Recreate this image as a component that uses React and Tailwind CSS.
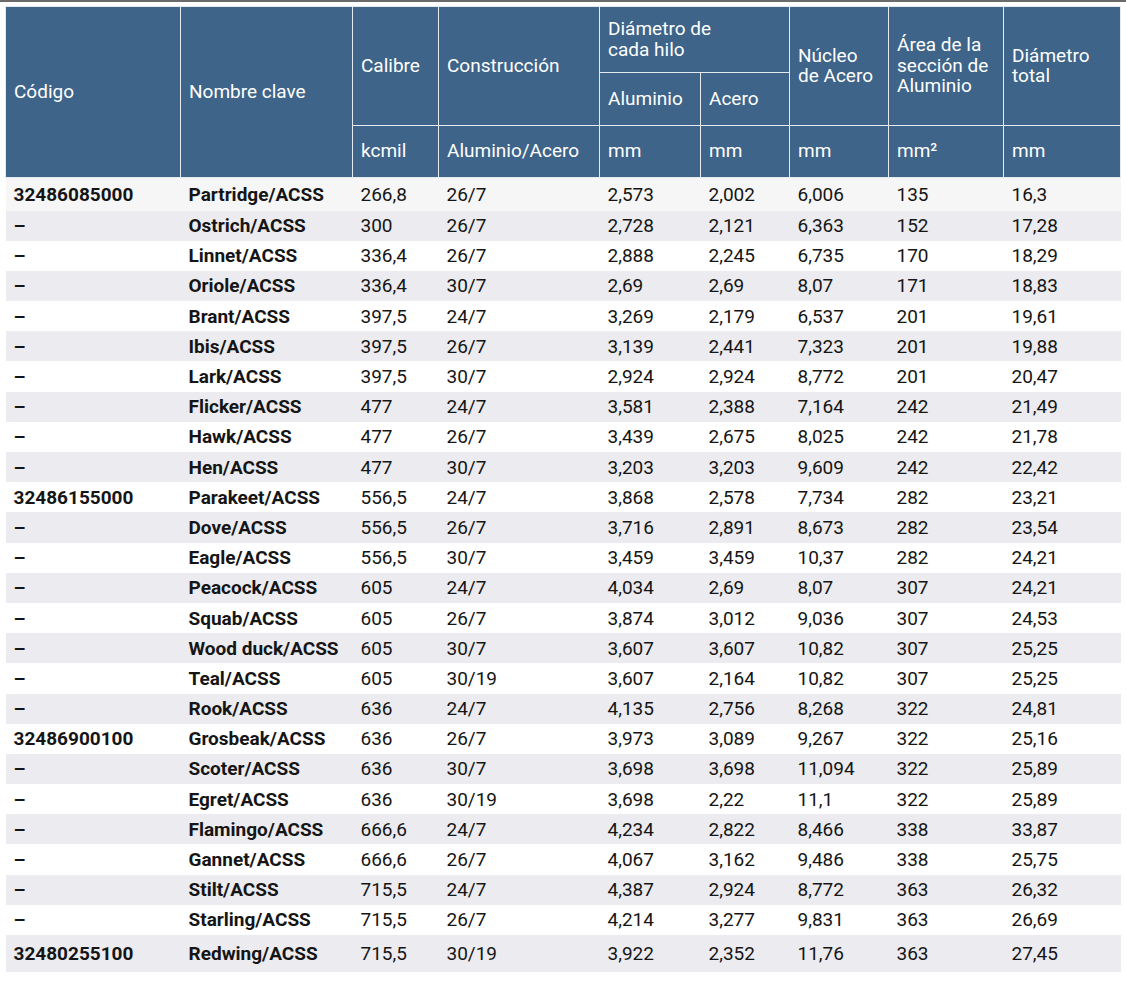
import React from 'react';

const rows = [
  ['32486085000', 'Partridge/ACSS', '266,8', '26/7', '2,573', '2,002', '6,006', '135', '16,3'],
  ['–', 'Ostrich/ACSS', '300', '26/7', '2,728', '2,121', '6,363', '152', '17,28'],
  ['–', 'Linnet/ACSS', '336,4', '26/7', '2,888', '2,245', '6,735', '170', '18,29'],
  ['–', 'Oriole/ACSS', '336,4', '30/7', '2,69', '2,69', '8,07', '171', '18,83'],
  ['–', 'Brant/ACSS', '397,5', '24/7', '3,269', '2,179', '6,537', '201', '19,61'],
  ['–', 'Ibis/ACSS', '397,5', '26/7', '3,139', '2,441', '7,323', '201', '19,88'],
  ['–', 'Lark/ACSS', '397,5', '30/7', '2,924', '2,924', '8,772', '201', '20,47'],
  ['–', 'Flicker/ACSS', '477', '24/7', '3,581', '2,388', '7,164', '242', '21,49'],
  ['–', 'Hawk/ACSS', '477', '26/7', '3,439', '2,675', '8,025', '242', '21,78'],
  ['–', 'Hen/ACSS', '477', '30/7', '3,203', '3,203', '9,609', '242', '22,42'],
  ['32486155000', 'Parakeet/ACSS', '556,5', '24/7', '3,868', '2,578', '7,734', '282', '23,21'],
  ['–', 'Dove/ACSS', '556,5', '26/7', '3,716', '2,891', '8,673', '282', '23,54'],
  ['–', 'Eagle/ACSS', '556,5', '30/7', '3,459', '3,459', '10,37', '282', '24,21'],
  ['–', 'Peacock/ACSS', '605', '24/7', '4,034', '2,69', '8,07', '307', '24,21'],
  ['–', 'Squab/ACSS', '605', '26/7', '3,874', '3,012', '9,036', '307', '24,53'],
  ['–', 'Wood duck/ACSS', '605', '30/7', '3,607', '3,607', '10,82', '307', '25,25'],
  ['–', 'Teal/ACSS', '605', '30/19', '3,607', '2,164', '10,82', '307', '25,25'],
  ['–', 'Rook/ACSS', '636', '24/7', '4,135', '2,756', '8,268', '322', '24,81'],
  ['32486900100', 'Grosbeak/ACSS', '636', '26/7', '3,973', '3,089', '9,267', '322', '25,16'],
  ['–', 'Scoter/ACSS', '636', '30/7', '3,698', '3,698', '11,094', '322', '25,89'],
  ['–', 'Egret/ACSS', '636', '30/19', '3,698', '2,22', '11,1', '322', '25,89'],
  ['–', 'Flamingo/ACSS', '666,6', '24/7', '4,234', '2,822', '8,466', '338', '33,87'],
  ['–', 'Gannet/ACSS', '666,6', '26/7', '4,067', '3,162', '9,486', '338', '25,75'],
  ['–', 'Stilt/ACSS', '715,5', '24/7', '4,387', '2,924', '8,772', '363', '26,32'],
  ['–', 'Starling/ACSS', '715,5', '26/7', '4,214', '3,277', '9,831', '363', '26,69'],
  ['32480255100', 'Redwing/ACSS', '715,5', '30/19', '3,922', '2,352', '11,76', '363', '27,45'],
];

const th = 'border border-[#e4eaf0] bg-[#3e6489] px-2 text-left align-middle font-normal leading-[20.5px] text-white';

const rowBg = (i) => {
  if (i === 0) return 'bg-[#f6f6f6]';
  return i % 2 === 1 ? 'bg-[#ebebf0]' : 'bg-white';
};

const rowH = (i) => {
  if (i === 0) return 'h-[33px]';
  if (i === rows.length - 1) return 'h-[37px]';
  return 'h-[30.2px]';
};

export default function App() {
  return (
    <div className="min-h-screen bg-white font-['Roboto',sans-serif] text-[19px] text-[#151515]">
      <div className="h-[2px] bg-[#6a6a6a]" />
      <div className="pl-[5px] pt-[4px]">
        <table className="w-[1115px] table-fixed border-collapse">
          <colgroup>
            <col className="w-[175px]" />
            <col className="w-[172px]" />
            <col className="w-[86px]" />
            <col className="w-[161px]" />
            <col className="w-[101px]" />
            <col className="w-[89px]" />
            <col className="w-[99px]" />
            <col className="w-[115px]" />
            <col className="w-[117px]" />
          </colgroup>
          <thead>
            <tr className="h-[66px]">
              <th rowSpan={3} className={th}>Código</th>
              <th rowSpan={3} className={th}>Nombre clave</th>
              <th rowSpan={2} className={th}>Calibre</th>
              <th rowSpan={2} className={th}>Construcción</th>
              <th colSpan={2} className={th}>Diámetro de<br />cada hilo</th>
              <th rowSpan={2} className={th}>Núcleo<br />de Acero</th>
              <th rowSpan={2} className={th}>Área de la<br />sección de<br />Aluminio</th>
              <th rowSpan={2} className={th}>Diámetro<br />total</th>
            </tr>
            <tr className="h-[53px]">
              <th className={th}>Aluminio</th>
              <th className={th}>Acero</th>
            </tr>
            <tr className="h-[52px]">
              <th className={th}>kcmil</th>
              <th className={th}>Aluminio/Acero</th>
              <th className={th}>mm</th>
              <th className={th}>mm</th>
              <th className={th}>mm</th>
              <th className={th}>mm²</th>
              <th className={th}>mm</th>
            </tr>
          </thead>
          <tbody>
            {rows.map((r, i) => (
              <tr key={i} className={`${rowBg(i)} ${rowH(i)}`}>
                {r.map((c, j) => (
                  <td
                    key={j}
                    className={`px-2 py-0 align-middle leading-none whitespace-nowrap ${j < 2 ? 'font-bold' : 'font-normal'}`}
                  >
                    {c}
                  </td>
                ))}
              </tr>
            ))}
          </tbody>
        </table>
      </div>
    </div>
  );
}
